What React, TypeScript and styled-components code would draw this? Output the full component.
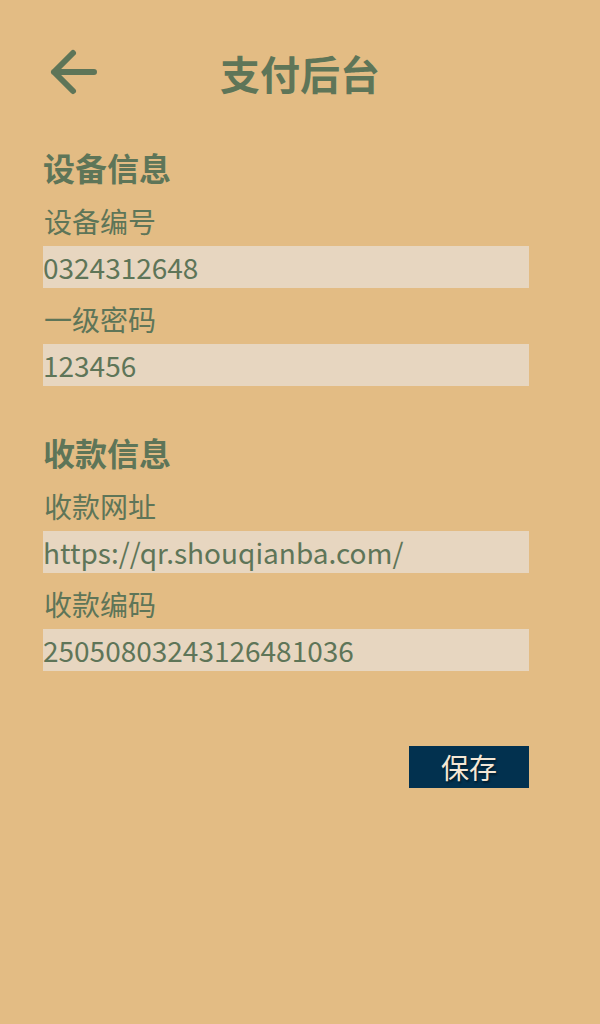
import React from 'react';
import styled, { createGlobalStyle } from 'styled-components';

const GlobalStyle = createGlobalStyle`
  html, body {
    margin: 0;
    padding: 0;
    background: #e3bc84;
  }
  body {
    font-family: "Noto Sans CJK SC", "Noto Sans", sans-serif;
    color: #5e7558;
  }
`;

const Page = styled.div`
  width: 600px;
  min-height: 1024px;
  background: #e3bc84;
`;

const Header = styled.header`
  position: relative;
  display: flex;
  align-items: center;
  justify-content: center;
  padding-top: 49px;
  height: 48px;
`;

const BackButton = styled.button`
  position: absolute;
  left: 49px;
  top: 48px;
  width: 50px;
  height: 50px;
  padding: 0;
  border: none;
  background: transparent;
  color: #5e7558;
  cursor: pointer;

  svg {
    width: 50px;
    height: 50px;
    display: block;
  }
`;

const Title = styled.h1`
  margin: 0;
  font-size: 40px;
  line-height: 48px;
  font-weight: 700;
  color: #5e7558;
`;

const Content = styled.main`
  display: flex;
  flex-direction: column;
  width: 486px;
  margin-left: 43px;
`;

const SectionTitle = styled.h2<{ gapTop: number }>`
  margin: ${({ gapTop }) => gapTop}px 0 16px;
  font-size: 32px;
  line-height: 40px;
  font-weight: 700;
  color: #5e7558;
`;

const Label = styled.div<{ first?: boolean }>`
  margin-top: ${({ first }) => (first ? 0 : 13)}px;
  margin-bottom: 7px;
  font-size: 28px;
  line-height: 36px;
  padding-left: 1px;
  color: #5e7558;
`;

const Field = styled.input`
  box-sizing: border-box;
  width: 486px;
  height: 42px;
  margin: 0;
  padding: 0;
  border: none;
  outline: none;
  background: #e7d6c0;
  font-family: "Noto Sans CJK SC", "Noto Sans", sans-serif;
  font-size: 28px;
  color: #5e7558;
`;

const Actions = styled.div`
  display: flex;
  justify-content: flex-end;
  margin-top: 75px;
`;

const SaveButton = styled.button`
  width: 120px;
  height: 42px;
  padding: 0;
  border: none;
  background: #02314f;
  color: #f4e7d6;
  font-family: "Noto Sans CJK SC", "Noto Sans", sans-serif;
  font-size: 28px;
  line-height: 42px;
  text-shadow: 1px 2px 2px rgba(0, 0, 0, 0.45);
  cursor: pointer;
`;

const sections = [
  {
    title: '设备信息',
    gapTop: 50,
    fields: [
      { label: '设备编号', value: '0324312648' },
      { label: '一级密码', value: '123456' },
    ],
  },
  {
    title: '收款信息',
    gapTop: 46,
    fields: [
      { label: '收款网址', value: 'https://qr.shouqianba.com/' },
      { label: '收款编码', value: '25050803243126481036' },
    ],
  },
];

const App: React.FC = () => {
  return (
    <Page>
      <GlobalStyle />
      <Header>
        <BackButton aria-label="返回">
          <svg viewBox="0 0 50 50" fill="none">
            <path
              d="M45 24H5M24 5L5 24l19 19"
              stroke="currentColor"
              strokeWidth={6}
              strokeLinecap="round"
              strokeLinejoin="round"
            />
          </svg>
        </BackButton>
        <Title>支付后台</Title>
      </Header>

      <Content>
        {sections.map((section) => (
          <React.Fragment key={section.title}>
            <SectionTitle gapTop={section.gapTop}>{section.title}</SectionTitle>
            {section.fields.map((field, i) => (
              <React.Fragment key={field.label}>
                <Label first={i === 0}>{field.label}</Label>
                <Field defaultValue={field.value} />
              </React.Fragment>
            ))}
          </React.Fragment>
        ))}
        <Actions>
          <SaveButton>保存</SaveButton>
        </Actions>
      </Content>
    </Page>
  );
};

export default App;
